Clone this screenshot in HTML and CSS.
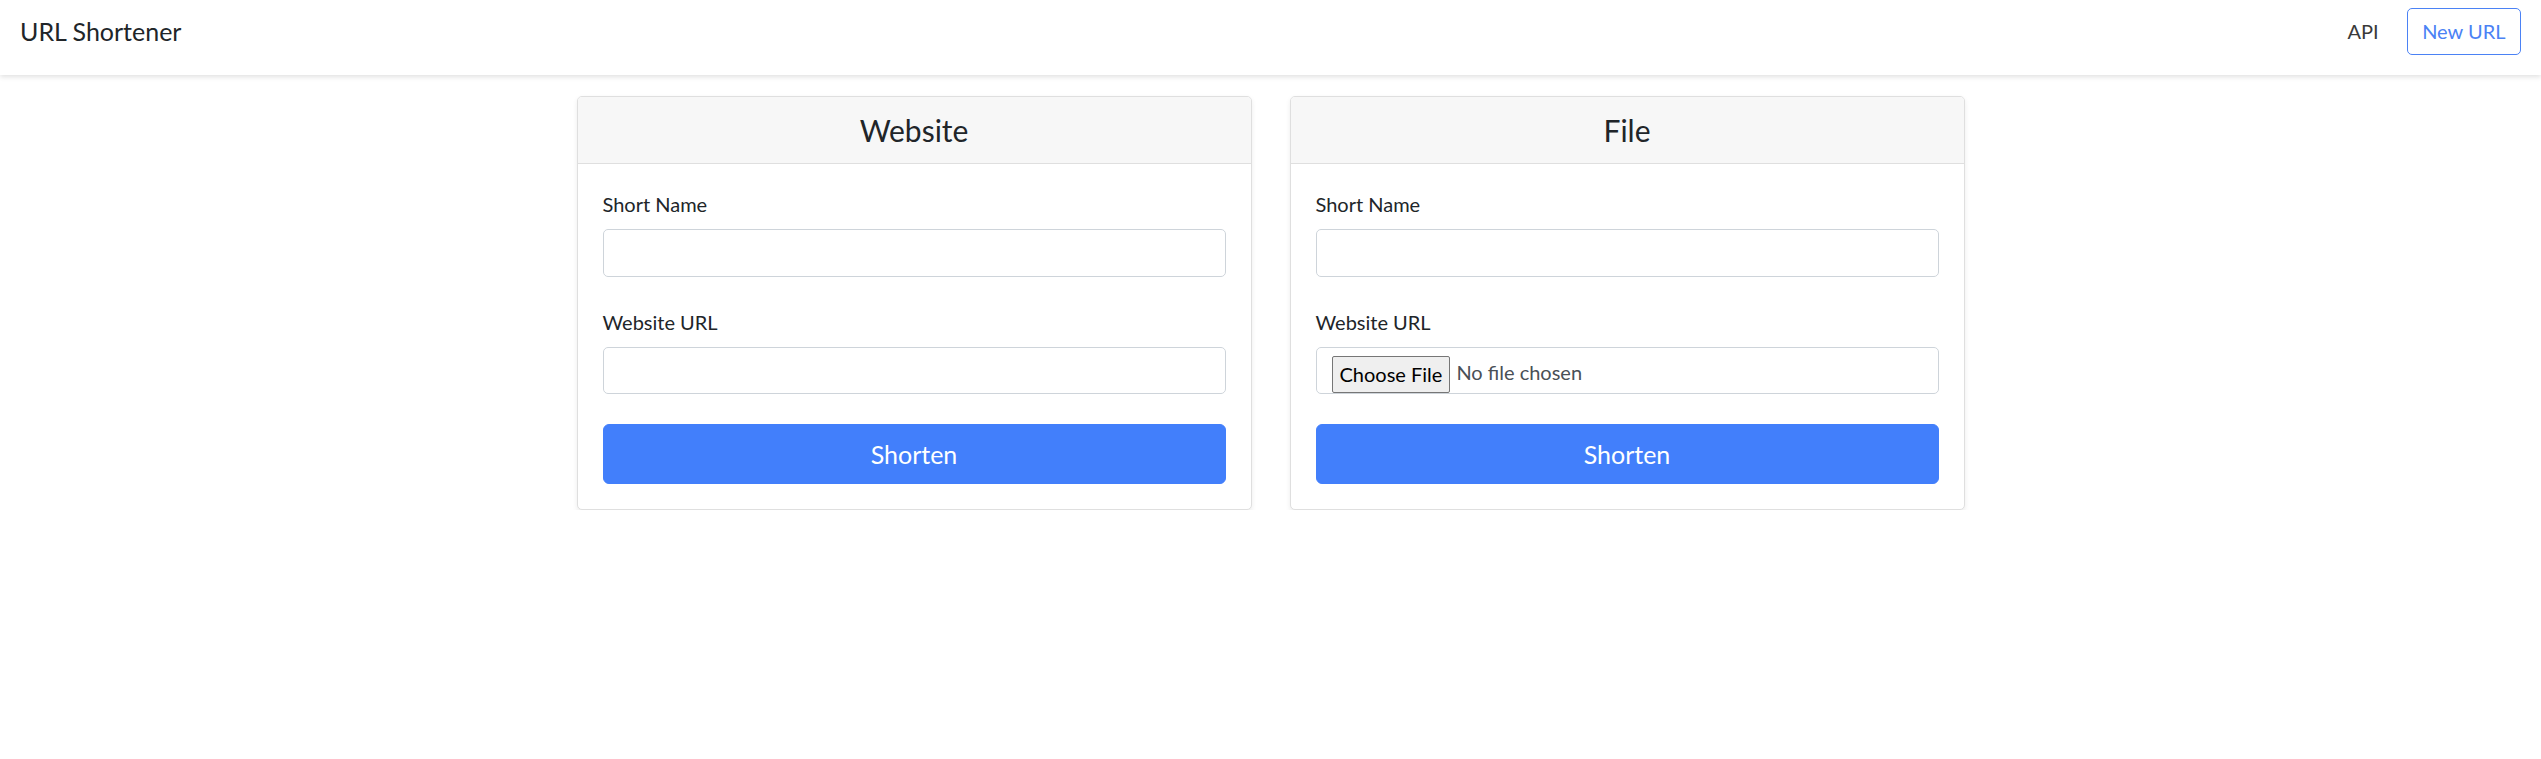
FILE: index.html
```html
<!DOCTYPE html>
<html lang="en">
<head>
<meta charset="utf-8">
<title>URL Shortener</title>
<link rel="stylesheet" href="styles.css">
</head>
<body>
<nav class="navbar">
  <a class="brand" href="#">URL Shortener</a>
  <div class="nav-right">
    <a class="nav-link" href="#">API</a>
    <a class="btn-outline" href="#">New URL</a>
  </div>
</nav>
<main class="container">
  <section class="card">
    <div class="card-header"><h4>Website</h4></div>
    <form class="card-body">
      <div class="form-group">
        <label class="form-label">Short Name</label>
        <input class="form-control" type="text">
      </div>
      <div class="form-group">
        <label class="form-label">Website URL</label>
        <input class="form-control" type="text">
      </div>
      <button class="btn-primary" type="button">Shorten</button>
    </form>
  </section>
  <section class="card">
    <div class="card-header"><h4>File</h4></div>
    <form class="card-body">
      <div class="form-group">
        <label class="form-label">Short Name</label>
        <input class="form-control" type="text">
      </div>
      <div class="form-group">
        <label class="form-label">Website URL</label>
        <input class="form-control file-control" type="file">
      </div>
      <button class="btn-primary" type="button">Shorten</button>
    </form>
  </section>
</main>
</body>
</html>
```
FILE: styles.css
```css
* { box-sizing: border-box; }
html, body { margin: 0; padding: 0; }
body {
  font-family: Lato, "Open Sans", "Liberation Sans", sans-serif;
  font-size: 20px;
  line-height: 1.5;
  color: #212529;
  background: #fff;
}
.navbar {
  height: 75px;
  padding: 7.5px 20px 20px;
  display: flex;
  align-items: center;
  justify-content: space-between;
  background: #fff;
  box-shadow: 0 2px 5px rgba(0,0,0,0.12);
}
.brand {
  font-size: 25px;
  line-height: 47.5px;
  color: #212529;
  text-decoration: none;
}
.nav-right { display: flex; align-items: center; }
.nav-link {
  padding: 0 10px;
  margin-right: 18px;
  color: #3a3a3a;
  text-decoration: none;
  line-height: 30px;
}
.btn-outline {
  display: inline-block;
  height: 47.5px;
  padding: 7.5px 14.5px;
  line-height: 30px;
  border: 1px solid #4b82f5;
  border-radius: 5px;
  color: #4b82f5;
  text-decoration: none;
}
.container {
  width: 1388px;
  margin: 21px auto 0;
  display: grid;
  grid-template-columns: 1fr 1fr;
  column-gap: 38px;
  align-items: start;
}
.card {
  border: 1px solid #dfdfdf;
  border-radius: 5px;
  background: #fff;
  box-shadow: 0 2.5px 5px rgba(0,0,0,0.075);
  overflow: hidden;
}
.card-header {
  background: #f7f7f7;
  border-bottom: 1px solid #dfdfdf;
  padding: 15px 25px;
  text-align: center;
}
.card-header h4 {
  margin: 0;
  font-size: 30px;
  font-weight: 400;
  line-height: 36px;
}
.card-body { padding: 25px; display: block; }
.form-group { margin-bottom: 30px; }
.form-label {
  display: inline-block;
  margin-bottom: 10px;
  line-height: 30px;
}
.form-control {
  display: block;
  width: 100%;
  height: 47.5px;
  padding: 7.5px 15px;
  font: inherit;
  line-height: 30px;
  color: #495057;
  background: #fff;
  border: 1px solid #ced4da;
  border-radius: 5px;
}
.file-control {
  padding: 8px 15px 0;
  overflow: hidden;
}
.file-control::file-selector-button {
  font: inherit;
  font-size: 20px;
  line-height: 26px;
  height: 37px;
  padding: 0 7px;
  margin: 0 6px 0 0;
  color: #000;
  background: #efefef;
  border: 1px solid #767676;
  border-radius: 2px;
  vertical-align: middle;
}
.btn-primary {
  display: block;
  width: 100%;
  height: 60px;
  padding: 11px 20px 9px;
  font: inherit;
  font-size: 25px;
  line-height: 37.5px;
  color: #fff;
  background: #427ffb;
  border: 1px solid #427ffb;
  border-radius: 6px;
  cursor: pointer;
}
```
